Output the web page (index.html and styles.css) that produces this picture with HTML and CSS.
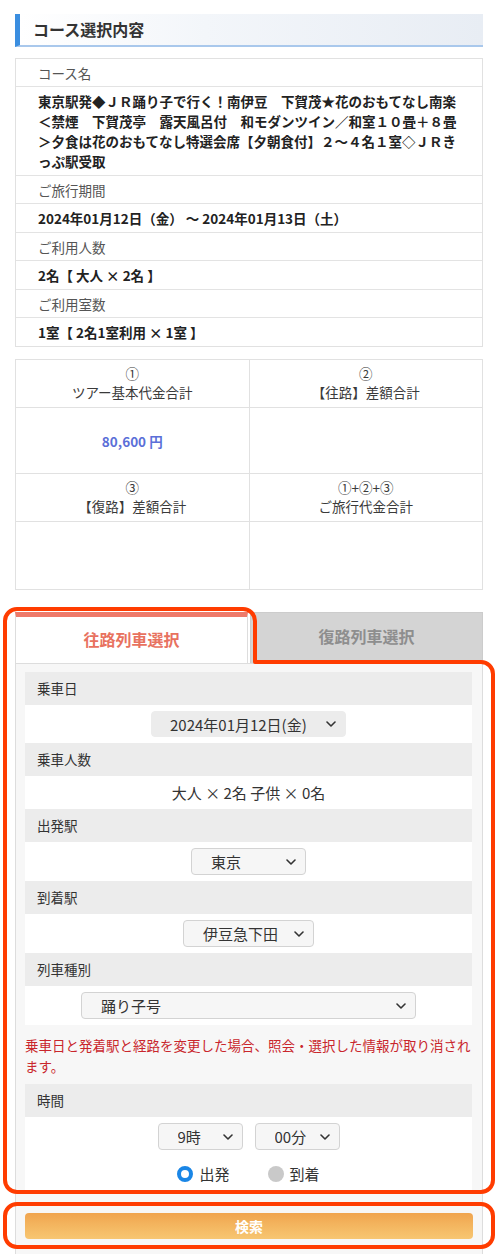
FILE: index.html
```html
<!DOCTYPE html>
<html lang="ja">
<head>
<meta charset="utf-8">
<title>コース選択内容</title>
<link rel="stylesheet" href="styles.css">
</head>
<body>
<div class="page">
  <h2 class="sec-title">コース選択内容</h2>

  <div class="course">
    <div class="crow lbl">コース名</div>
    <div class="crow val">東京駅発◆ＪＲ踊り子で行く！南伊豆　下賀茂★花のおもてなし南楽＜禁煙　下賀茂亭　露天風呂付　和モダンツイン／和室１０畳＋８畳＞夕食は花のおもてなし特選会席【夕朝食付】２～４名１室◇ＪＲきっぷ駅受取</div>
    <div class="crow lbl">ご旅行期間</div>
    <div class="crow val">2024年01月12日（金） ～ 2024年01月13日（土）</div>
    <div class="crow lbl">ご利用人数</div>
    <div class="crow val">2名【 大人 × 2名 】</div>
    <div class="crow lbl">ご利用室数</div>
    <div class="crow val">1室【 2名1室利用 × 1室 】</div>
  </div>

  <div class="price">
    <div class="pcell phead">①<br>ツアー基本代金合計</div>
    <div class="pcell phead">②<br>【往路】差額合計</div>
    <div class="pcell pval"><span class="amount">80,600 円</span></div>
    <div class="pcell pval"></div>
    <div class="pcell phead">③<br>【復路】差額合計</div>
    <div class="pcell phead">①+②+③<br>ご旅行代金合計</div>
    <div class="pcell pval tall"></div>
    <div class="pcell pval tall"></div>
  </div>

  <div class="tabs">
    <div class="tab active">往路列車選択</div>
    <div class="tab">復路列車選択</div>
  </div>

  <div class="panel">
    <div class="fields">
      <div class="flabel">乗車日</div>
      <div class="fval">
        <select class="sel sel-date"><option>2024年01月12日(金)</option></select>
      </div>
      <div class="flabel">乗車人数</div>
      <div class="fval ftext">大人 × 2名 子供 × 0名</div>
      <div class="flabel">出発駅</div>
      <div class="fval">
        <select class="sel sel-from"><option>東京</option></select>
      </div>
      <div class="flabel">到着駅</div>
      <div class="fval">
        <select class="sel sel-to"><option>伊豆急下田</option></select>
      </div>
      <div class="flabel">列車種別</div>
      <div class="fval">
        <select class="sel sel-type"><option>踊り子号</option></select>
      </div>
    </div>

    <p class="warn">乗車日と発着駅と経路を変更した場合、照会・選択した情報が取り消されます。</p>

    <div class="fields">
      <div class="flabel">時間</div>
      <div class="fval ftime">
        <div class="time-sels">
          <select class="sel sel-time"><option>9時</option></select>
          <select class="sel sel-time"><option>00分</option></select>
        </div>
        <div class="radios">
          <label class="radio"><input type="radio" name="dep" class="rad" checked>出発</label>
          <label class="radio"><input type="radio" name="dep" class="rad">到着</label>
        </div>
      </div>
    </div>

    <button class="search" type="button">検索</button>
  </div>

  <svg class="annot" width="499" height="1254" viewBox="0 0 499 1254" aria-hidden="true">
    <path d="M5 621 A12 12 0 0 1 17 609 L243 609 A12 12 0 0 1 255 621 L255 662 L481 662 A12 12 0 0 1 493 674 L493 1180 A12 12 0 0 1 481 1192 L17 1192 A12 12 0 0 1 5 1180 Z" fill="none" stroke="#ff3c00" stroke-width="4" stroke-linejoin="round"/>
    <rect x="5" y="1204" width="488" height="43" rx="12" ry="12" fill="none" stroke="#ff3c00" stroke-width="4"/>
  </svg>
</div>
</body>
</html>
```

FILE: styles.css
```css
html, body {
  margin: 0;
  padding: 0;
  background: #ffffff;
}

body {
  font-family: "Noto Sans CJK JP", "Noto Sans", sans-serif;
  font-size: 13.5px;
  color: #333333;
}

.page {
  position: relative;
  width: 499px;
  height: 1254px;
  overflow: hidden;
  box-sizing: border-box;
  padding: 14px 16px 0 15px;
}

.sec-title {
  margin: 0;
  height: 33px;
  box-sizing: border-box;
  border-left: 5px solid #3b8ee0;
  border-bottom: 2px solid #a9c8ec;
  background: linear-gradient(to right, #ffffff 0%, #f3f6fa 40%, #e8edf4 100%);
  padding-left: 13px;
  font-size: 16px;
  font-weight: bold;
  line-height: 31px;
  color: #333333;
}

/* course table */
.course {
  margin-top: 11px;
  border: 1px solid #e1e1e1;
}

.crow {
  padding: 4px 22px 4px;
  line-height: 20px;
  border-top: 1px solid #e3e3e3;
  line-break: normal;
}

.crow:first-child {
  border-top: none;
}

.crow.lbl {
  padding-bottom: 3px;
  color: #555555;
}

.crow.val {
  font-weight: bold;
  color: #222222;
}

/* price grid */
.price {
  margin-top: 12px;
  display: grid;
  grid-template-columns: 1fr 1fr;
  border-top: 1px solid #e1e1e1;
  border-left: 1px solid #e1e1e1;
}

.pcell {
  border-right: 1px solid #e1e1e1;
  border-bottom: 1px solid #e1e1e1;
  text-align: center;
}

.phead {
  padding: 4px 0 5px;
  line-height: 19px;
  color: #3a3a3a;
}

.pval {
  height: 65px;
  display: flex;
  align-items: center;
  justify-content: center;
}

.pval.tall {
  height: 67px;
}

.amount {
  color: #5b6fd8;
  font-weight: bold;
}

/* tabs */
.tabs {
  margin-top: 22px;
  display: flex;
  gap: 2px;
}

.tab {
  flex: 1;
  height: 51px;
  box-sizing: border-box;
  text-align: center;
  font-size: 16px;
  font-weight: bold;
  line-height: 47px;
  color: #8e8e8e;
  background: #d4d4d4;
  border: 1px solid #cccccc;
  border-bottom: none;
}

.tab.active {
  background: #ffffff;
  color: #e8725f;
  border: 1px solid #dddddd;
  border-top: 5px solid #ee7a6a;
  border-bottom: none;
  line-height: 44px;
}

/* panel */
.panel {
  border: 1px solid #dddddd;
  border-bottom: none;
  background: #f7f7f7;
  padding: 8px 10px 40px 9px;
  min-height: 600px;
}

.fields {
  background: #ffffff;
}

.flabel {
  height: 33px;
  line-height: 33px;
  padding-left: 12px;
  background: #ececec;
  color: #333333;
}

.fval {
  padding: 6px 0 6px;
  background: #ffffff;
  text-align: center;
  line-height: 0;
}

.fval.ftext {
  padding: 5px 0 5px;
  line-height: 23px;
  font-size: 15px;
  color: #333333;
}

.sel {
  appearance: none;
  -webkit-appearance: none;
  box-sizing: border-box;
  height: 27px;
  margin: 0;
  padding: 0 24px 0 19px;
  font-family: "Noto Sans CJK JP", "Noto Sans", sans-serif;
  font-size: 15px;
  line-height: 25px;
  color: #333333;
  border: 1px solid #d3d3d3;
  border-radius: 4px;
  background-color: #f6f6f6;
  background-image: url("data:image/svg+xml;utf8,<svg xmlns='http://www.w3.org/2000/svg' width='10' height='6' viewBox='0 0 10 6'><path d='M1 1 L5 5 L9 1' fill='none' stroke='%23333333' stroke-width='1.6' stroke-linecap='round' stroke-linejoin='round'/></svg>");
  background-repeat: no-repeat;
  background-position: right 9px center;
  vertical-align: middle;
}

.sel-date {
  width: 195px;
  height: 26px;
  border-color: #ececec;
  background-color: #ececec;
  padding-left: 18px;
}

.sel-from {
  width: 115px;
}

.sel-to {
  width: 131px;
}

.sel-type {
  width: 335px;
}

.sel-time {
  width: 85px;
}

.ftime {
  padding: 6px 0 5px;
}

.time-sels {
  display: flex;
  justify-content: center;
  gap: 12px;
}

.radios {
  margin-top: 11px;
  display: flex;
  justify-content: center;
  gap: 38px;
  line-height: 26px;
  font-size: 15px;
}

.radio {
  display: flex;
  align-items: center;
  gap: 6px;
  color: #333333;
}

.rad {
  appearance: none;
  -webkit-appearance: none;
  margin: 0;
  width: 16px;
  height: 16px;
  border-radius: 50%;
  box-sizing: border-box;
  background: #c9c9c9;
  border: none;
}

.rad:checked {
  background: #ffffff;
  border: 4.5px solid #1a86e6;
}

.warn {
  margin: 10px 0 7px;
  font-size: 13.5px;
  line-height: 21px;
  color: #c9262c;
}

.search {
  display: block;
  margin-top: 21px;
  width: 448px;
  height: 26px;
  border: none;
  border-radius: 4px;
  background: linear-gradient(to bottom, #f0a44e 0%, #f4b862 55%, #f7c672 100%);
  color: #ffffff;
  font-family: "Noto Sans CJK JP", "Noto Sans", sans-serif;
  font-size: 14px;
  font-weight: bold;
  line-height: 26px;
  padding: 0;
}

.annot {
  position: absolute;
  left: 0;
  top: 0;
  pointer-events: none;
}
```
